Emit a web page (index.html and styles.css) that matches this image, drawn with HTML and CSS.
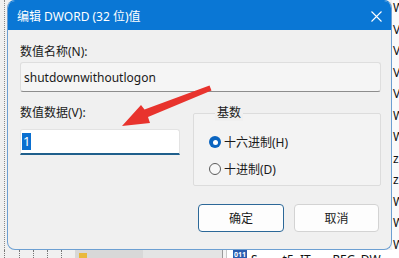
FILE: index.html
```html
<!DOCTYPE html>
<html>
<head>
<meta charset="utf-8">
<link rel="stylesheet" href="styles.css">
</head>
<body>
<div class="screen">
  <div class="lstrip"><div class="dots"></div></div>
  <div class="dialog">
    <div class="titlebar">
      <span class="title">编辑 DWORD (32 位)值</span>
      <span class="close"><svg width="11" height="11" viewBox="0 0 11 11"><path d="M0.5 0.5 L10.5 10.5 M10.5 0.5 L0.5 10.5" stroke="#fff" stroke-width="1.1" fill="none"/></svg></span>
    </div>
    <div class="content">
      <div class="label">数值名称(N):</div>
      <div class="field ro">shutdownwithoutlogon</div>
      <div class="row">
        <div class="col">
          <div class="label">数值数据(V):</div>
          <div class="field edit"><span class="sel">1</span></div>
        </div>
        <fieldset class="group">
          <legend>基数</legend>
          <div class="opt"><span class="radio on"></span>十六进制(H)</div>
          <div class="opt"><span class="radio"></span>十进制(D)</div>
        </fieldset>
      </div>
      <div class="buttons">
        <div class="btn default">确定</div>
        <div class="btn">取消</div>
      </div>
    </div>
  </div>
  <div class="rstrip">W
V
V
V
V
W
W
z
z
W
W
W</div>
  <div class="bstrip">
    <div class="seg tree"><span class="dl"></span><span class="dl"></span><span class="dl"></span><span class="dl"></span><span class="dl"></span></div>
    <div class="seg sel-item"><span class="folder"></span></div>
    <div class="seg scroll"></div>
    <div class="seg split"></div>
    <div class="seg list"><span class="bin">011</span><span class="ltxt">S        t5  IT       REG_DW</span></div>
  </div>
  <svg class="arrow" width="399" height="258" viewBox="0 0 399 258">
    <polygon points="122,126 141,105 144.5,109.5 209.5,85.5 211.5,90.5 148,117 150,123" fill="#e8332d"/>
  </svg>
</div>
</body>
</html>
```

FILE: styles.css
```css
* { box-sizing: border-box; }
html, body { margin: 0; padding: 0; }
body {
  width: 399px;
  height: 258px;
  overflow: hidden;
  font-family: "Noto Sans", "Noto Sans CJK SC", sans-serif;
  font-size: 12px;
  color: #1a1a1a;
  background: #f0f0f0;
}
.screen {
  position: relative;
  display: grid;
  grid-template-columns: 7px 385px 7px;
  grid-template-rows: 250px 8px;
  width: 399px;
  height: 258px;
}
.lstrip {
  grid-row: 1;
  grid-column: 1;
  background: #f0f0f0;
  padding-left: 4px;
}
.dots {
  height: 100%;
  border-left: 1px dotted #8a8a8a;
}
.rstrip {
  grid-row: 1;
  grid-column: 3;
  background: #fafafa;
  white-space: pre;
  overflow: hidden;
  line-height: 21.5px;
  margin-top: -3px;
  padding-left: 1px;
  font-size: 12px;
  color: #111;
}
.bstrip {
  grid-row: 2;
  grid-column: 1 / 4;
  display: flex;
  overflow: hidden;
  background: #f0f0f0;
}
.seg { height: 8px; }
.tree {
  width: 75px;
  display: flex;
  padding-left: 4px;
}
.dl {
  border-left: 1px dotted #777;
  height: 8px;
  width: 16px;
}
.dl:first-child { width: 17px; }
.sel-item {
  width: 68px;
  background: #d8d8d8;
  padding: 3px 0 0 4px;
}
.folder {
  display: block;
  width: 8px;
  height: 5px;
  background: #e9b93c;
}
.scroll { width: 79px; background: #e4e4e4; }
.split {
  width: 5px;
  border-left: 1px solid #9a9a9a;
  border-right: 1px solid #c8c8c8;
  background: #f3f3f3;
}
.list {
  flex: 1;
  background: #fff;
  display: flex;
  align-items: flex-start;
  padding-left: 6px;
  gap: 4px;
  white-space: pre;
}
.bin {
  font-size: 7px;
  line-height: 8px;
  padding: 1px 1px 0;
  color: #fff;
  background: #2a5db0;
  font-weight: bold;
  height: 8px;
}
.ltxt {
  line-height: 16px;
  margin-top: 2px;
  color: #111;
}

.dialog {
  grid-row: 1;
  grid-column: 2;
  background: #f0f0f0;
  border: 1px solid #6c9fd2;
  border-top-color: #0a77d5;
  border-radius: 8px;
  overflow: hidden;
  display: flex;
  flex-direction: column;
}
.titlebar {
  height: 29px;
  background: #0a77d5;
  display: flex;
  align-items: center;
  padding-left: 9px;
  color: #fff;
}
.title {
  flex: 1;
  font-size: 12px;
  padding-top: 1px;
}
.close {
  width: 30px;
  height: 29px;
  display: flex;
  align-items: center;
  justify-content: center;
  padding-top: 1px;
}
.content {
  padding: 14px 10px 0 12px;
  display: flex;
  flex-direction: column;
}
.label {
  line-height: 16px;
  height: 16px;
}
.field {
  margin-top: 2px;
  height: 30px;
  border: 1px solid #dedede;
  border-bottom-color: #8d8d8d;
  border-radius: 3px;
  background: #f5f5f5;
  display: flex;
  align-items: center;
  padding-left: 3px;
}
.row {
  margin-top: 13px;
  display: flex;
  gap: 13px;
  align-items: flex-start;
}
.col {
  width: 160px;
  display: flex;
  flex-direction: column;
}
.field.edit {
  margin-top: 8px;
  height: 26px;
  background: #fff;
  border: 1px solid #e3e3e3;
  border-bottom: 2px solid #1f5f8c;
  border-radius: 3px 3px 0 0;
  padding-left: 1px;
}
.sel {
  background: #0a6fd0;
  color: #fff;
  line-height: 17px;
  padding: 0 1px;
  font-size: 13px;
}
.group {
  flex: 1;
  margin: 0;
  border: 1px solid #dcdcdc;
  border-radius: 2px;
  padding: 11px 0 6px 15px;
  min-width: 0;
  background: #f3f3f3;
}
.group legend {
  line-height: 16px;
  padding: 0 2px;
  margin-left: 6px;
  background: #f0f0f0;
}
.opt {
  height: 20px;
  display: flex;
  align-items: center;
  gap: 3px;
}
.opt + .opt { margin-top: 7px; }
.radio {
  width: 12px;
  height: 12px;
  border-radius: 50%;
  border: 1px solid #5b5b5b;
  background: #f8f8f8;
  display: flex;
  align-items: center;
  justify-content: center;
}
.radio.on {
  border: none;
  background: #0a64c0;
}
.radio.on::after {
  content: "";
  width: 5px;
  height: 5px;
  border-radius: 50%;
  background: #fff;
}
.buttons {
  margin-top: 18px;
  display: flex;
  justify-content: flex-end;
  gap: 10px;
  padding-right: 2px;
}
.btn {
  width: 85px;
  height: 28px;
  border: 1px solid #d3d3d3;
  border-radius: 4px;
  background: #fdfdfd;
  display: flex;
  align-items: center;
  justify-content: center;
}
.btn.default {
  width: 86px;
  border: 1px solid #2c6898;
}
.arrow {
  position: absolute;
  left: 0;
  top: 0;
  pointer-events: none;
}
```
